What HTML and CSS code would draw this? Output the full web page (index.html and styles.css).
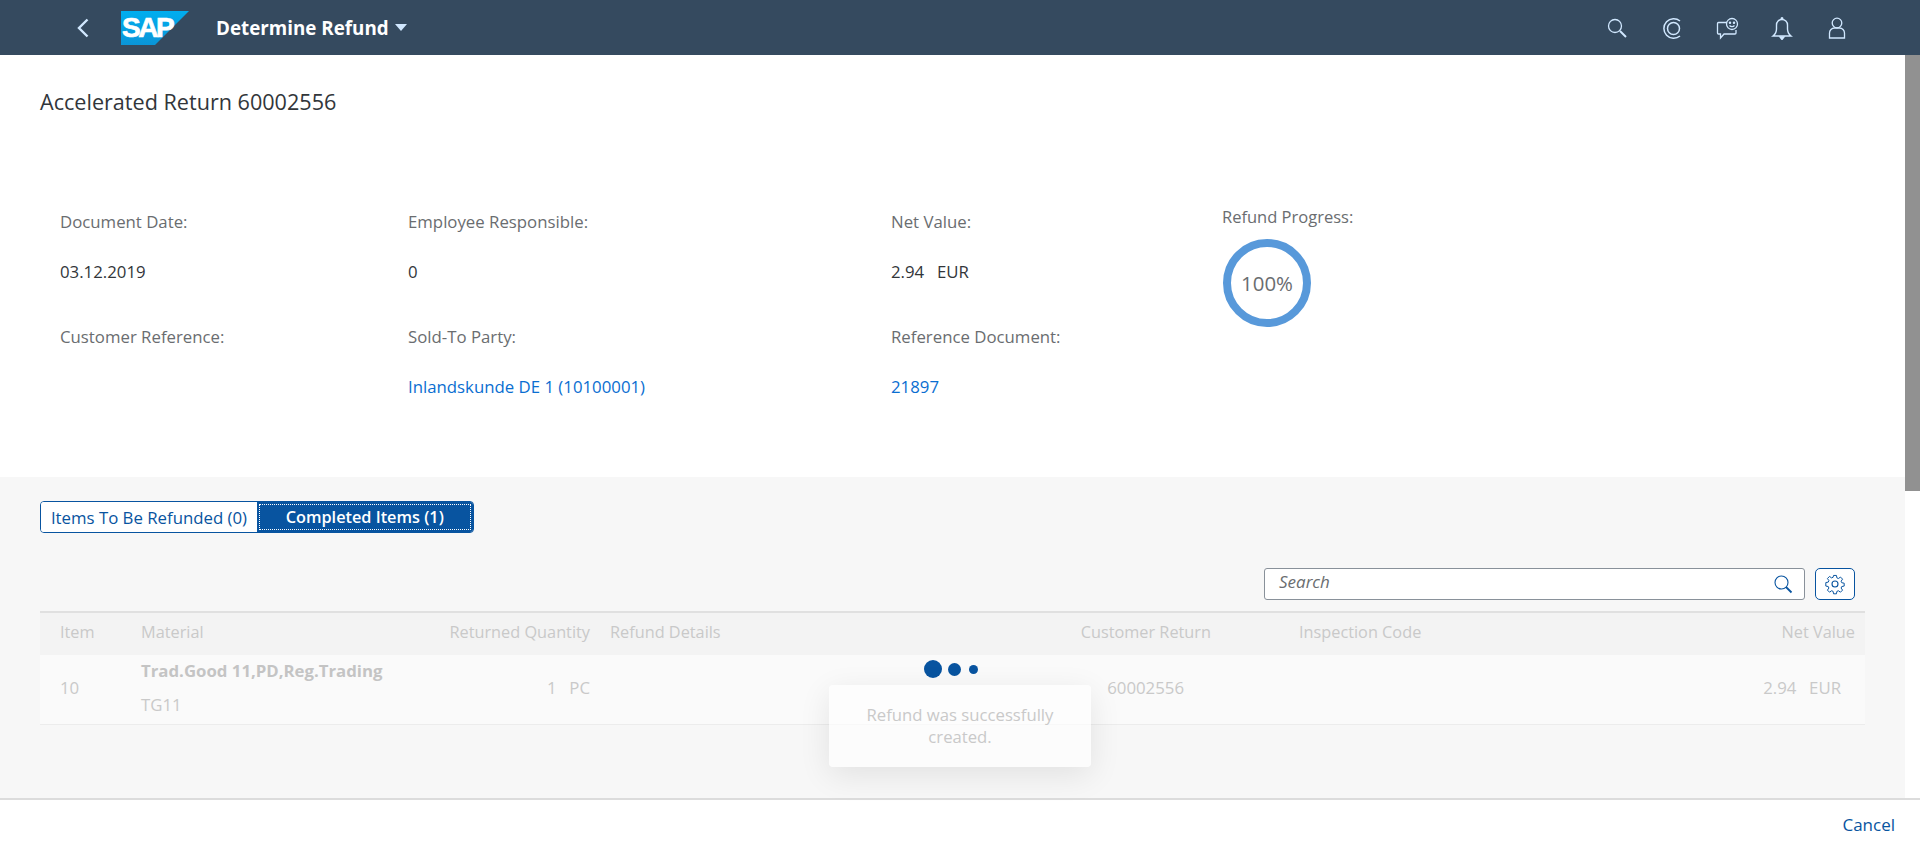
FILE: index.html
```html
<!DOCTYPE html>
<html lang="en">
<head>
<meta charset="utf-8">
<title>Determine Refund</title>
<link rel="stylesheet" href="styles.css">
</head>
<body>
<div class="app">
  <header class="shell">
    <div class="shell-left">
      <svg class="back" width="12" height="20" viewBox="0 0 12 20"><path d="M10.5 1.5 2 10l8.500 8.500" fill="none" stroke="#d1e8ff" stroke-width="2.400"/></svg>
      <div class="logo">
        <svg class="logo-bg" width="68" height="34" viewBox="0 0 68 34"><defs><linearGradient id="sapg" x1="0" y1="0" x2="0" y2="1"><stop offset="0" stop-color="#00aeef"/><stop offset="1" stop-color="#0a95d8"/></linearGradient></defs><polygon points="0,0 68,0 34,34 0,34" fill="url(#sapg)"/></svg>
        <span class="logo-text">SAP</span>
      </div>
      <div class="app-title">Determine Refund</div>
      <span class="caret"></span>
    </div>
    <div class="shell-right">
      <svg class="sh-icon" width="24" height="24" viewBox="0 0 24 24" fill="none" stroke="#d1e8ff" stroke-width="1.300"><circle cx="10" cy="10" r="6.500"/><path d="M15 15l6 6" stroke-width="2"/></svg>
      <svg class="sh-icon" width="24" height="24" viewBox="0 0 24 24" fill="none" stroke="#d1e8ff" stroke-width="1.500"><path d="M20 5A9.800 9.800 0 1 0 20 20"/><circle cx="13.500" cy="12.500" r="6"/></svg>
      <svg class="sh-icon" width="24" height="24" viewBox="0 0 24 24" fill="none" stroke="#d1e8ff" stroke-width="1.300"><path d="M12 6.500H3.500a1 1 0 0 0-1 1V17a1 1 0 0 0 1 1h2v4l3.500-4h11a1 1 0 0 0 1-1v-3"/><circle cx="17" cy="8" r="5.500"/><circle cx="15" cy="6.800" r=".6" fill="#d1e8ff"/><circle cx="19" cy="6.800" r=".6" fill="#d1e8ff"/><path d="M14.500 9.500c1.300 1.500 3.700 1.500 5 0"/></svg>
      <svg class="sh-icon" width="24" height="24" viewBox="0 0 24 24" fill="none" stroke="#d1e8ff" stroke-width="1.400"><path d="M3 20c2.500-2 3.500-3.500 3.500-7V9a5.500 5.500 0 0 1 11 0v4c0 3.500 1 5 3.500 7z"/><path d="M10 21h4l-2 2.500z" fill="#d1e8ff"/><circle cx="12" cy="2.500" r=".8" fill="#d1e8ff"/></svg>
      <svg class="sh-icon" width="24" height="24" viewBox="0 0 24 24" fill="none" stroke="#d1e8ff" stroke-width="1.300"><circle cx="12" cy="7" r="4.800"/><path d="M4.500 22v-5a5 5 0 0 1 5-5h5a5 5 0 0 1 5 5v5z"/></svg>
    </div>
  </header>

  <div class="middle">
    <main class="content">
      <section class="summary">
        <h1 class="doc-title">Accelerated Return 60002556</h1>
        <div class="info-grid">
          <div class="label">Document Date:</div>
          <div class="label">Employee Responsible:</div>
          <div class="label">Net Value:</div>
          <div class="progress-col">
            <div class="progress-label">Refund Progress:</div>
            <div class="ring">100%</div>
          </div>
          <div class="value">03.12.2019</div>
          <div class="value">0</div>
          <div class="value amount">2.94&nbsp; EUR</div>
          <div class="label">Customer Reference:</div>
          <div class="label">Sold-To Party:</div>
          <div class="label">Reference Document:</div>
          <div class="value"></div>
          <div class="value link">Inlandskunde DE 1 (10100001)</div>
          <div class="value link">21897</div>
        </div>
      </section>

      <section class="items">
        <div class="segmented">
          <div class="seg seg-off">Items To Be Refunded (0)</div>
          <div class="seg seg-on">Completed Items (1)</div>
        </div>
        <div class="toolbar">
          <div class="search">
            <span class="search-ph">Search</span>
            <svg width="20" height="20" viewBox="0 0 20 20" fill="none" stroke="#0854a0" stroke-width="1.100"><circle cx="8.500" cy="8.500" r="6.500"/><path d="M13 13l5.500 5.500" stroke-width="1.800"/></svg>
          </div>
          <button class="settings" type="button" aria-label="Settings">
            <svg width="22" height="22" viewBox="0 0 22 22" fill="none" stroke="#0854a0" stroke-width="1.100"><path d="M9.400 1.500h3.200l.5 2.700 1.700.7 2.300-1.600 2.300 2.300-1.600 2.300.7 1.700 2.700.5v3.200l-2.700.5-.7 1.700 1.600 2.300-2.300 2.300-2.300-1.600-1.700.7-.5 2.700H9.400l-.5-2.700-1.700-.7-2.300 1.600-2.300-2.300 1.600-2.300-.7-1.700-2.700-.5V9.400l2.700-.5.7-1.700-1.600-2.300 2.300-2.300 2.300 1.600 1.700-.7z" transform="translate(1.100 1.100) scale(.9)"/><circle cx="11" cy="11" r="3"/></svg>
          </button>
        </div>

        <div class="table">
          <div class="tr thead">
            <div class="c-item">Item</div>
            <div class="c-mat">Material</div>
            <div class="c-qty">Returned Quantity</div>
            <div class="c-det">Refund Details</div>
            <div class="c-ret">Customer Return</div>
            <div class="c-ins">Inspection Code</div>
            <div class="c-net">Net Value</div>
          </div>
          <div class="tr tbody">
            <div class="c-item">10</div>
            <div class="c-mat">
              <div class="mat-name">Trad.Good 11,PD,Reg.Trading</div>
              <div class="mat-id">TG11</div>
            </div>
            <div class="c-qty">1&nbsp; PC</div>
            <div class="c-det"></div>
            <div class="c-ret c-ret-val">60002556</div>
            <div class="c-ins"></div>
            <div class="c-net c-net-val">2.94&nbsp; EUR</div>
          </div>
        </div>
      </section>
    </main>
    <div class="scrollbar"><div class="thumb"></div></div>
  </div>

  <footer class="footer"><span class="cancel">Cancel</span></footer>

  <div class="dots"><span class="dot d1"></span><span class="dot d2"></span><span class="dot d3"></span></div>
  <div class="toast">Refund was successfully created.</div>
</div>
</body>
</html>
```

FILE: styles.css
```css
* { box-sizing: border-box; }
html, body { margin: 0; height: 100%; overflow: hidden; }
body { font-family: "Open Sans", "Liberation Sans", sans-serif; color: #32363a; background: #fff; }

.app { position: relative; width: 1920px; height: 848px; display: flex; flex-direction: column; }

.shell { height: 55px; flex: none; background: #354a5f; display: flex; align-items: center; justify-content: space-between; }
.shell-left { display: flex; align-items: center; padding-left: 77px; }
.back { margin-right: 32px; }
.logo { position: relative; width: 68px; height: 34px; margin-right: 27px; }
.logo-bg { display: block; }
.logo-text { position: absolute; left: 1px; top: 3px; font: bold 28px/28px "Liberation Sans", sans-serif; letter-spacing: -2.500px; color: #fff; -webkit-text-stroke: .7px #fff; }
.app-title { font-size: 18.800px; font-weight: 700; color: #fff; white-space: nowrap; }
.caret { width: 0; height: 0; margin-left: 6px; border-left: 6.500px solid transparent; border-right: 6.500px solid transparent; border-top: 7px solid #d1e8ff; }
.shell-right { display: flex; align-items: center; gap: 31px; padding-right: 71px; }
.sh-icon { display: block; }

.middle { flex: 1; min-height: 0; display: flex; }
.content { flex: 1; min-width: 0; display: flex; flex-direction: column; }
.scrollbar { width: 15px; flex: none; background: #fff; }
.thumb { height: 436px; background: #919191; }

.summary { height: 422px; flex: none; background: #fff; padding: 34px 0 0 40px; }
.doc-title { margin: 0; font-size: 21.600px; line-height: 26px; font-weight: 400; color: #32363a; }
.info-grid { margin: 82px 0 0 20px; display: grid; grid-template-columns: 348px 483px 331px 1fr; grid-template-rows: 50px 65px 50px 50px; }
.label { font-size: 16.800px; line-height: 50px; color: #6a6d70; white-space: nowrap; }
.value { font-size: 16.800px; line-height: 50px; color: #32363a; white-space: nowrap; }
.amount { word-spacing: 2px; }
.link { color: #0a6ed1; }
.progress-col { grid-column: 4; grid-row: 1 / 5; }
.progress-label { font-size: 16.500px; line-height: 40px; color: #6a6d70; white-space: nowrap; }
.ring { width: 88px; height: 88px; margin: 2px 0 0 1px; border: 8px solid #5899da; border-radius: 50%; display: flex; align-items: center; justify-content: center; font-size: 20.400px; color: #6a6d70; }

.items { flex: 1; min-height: 0; background: #f7f7f7; padding: 24px 40px 0 40px; }
.segmented { display: flex; width: 433.500px; height: 32px; border: 1px solid #0854a0; border-radius: 4px; overflow: hidden; font-size: 16.800px; }
.seg { display: flex; align-items: center; justify-content: center; white-space: nowrap; }
.seg-off { width: 216px; background: #fff; color: #0854a0; }
.seg-on { flex: 1; background: #0854a0; color: #fff; outline: 1px dotted #fff; outline-offset: -3px; font-weight: 600; font-size: 16.300px; }

.toolbar { margin-top: 35px; display: flex; justify-content: flex-end; gap: 10px; padding-right: 10px; height: 32px; }
.search { width: 541px; background: #fff; border: 1px solid #89919a; border-radius: 3px; display: flex; align-items: center; justify-content: space-between; padding: 0 11px 0 14px; }
.search-ph { font-size: 17px; line-height: 22px; margin-top: -4px; font-style: italic; color: #6a6d70; }
.search svg { display: block; }
.settings { width: 40px; height: 32px; padding: 0; background: #fff; border: 1px solid #0854a0; border-radius: 5px; display: flex; align-items: center; justify-content: center; }

.table { margin-top: 11px; font-size: 16.300px; color: #c9c9c9; }
.tr { display: grid; grid-template-columns: 91px 269px 200px 400px 221px 379px 265px; }
.tr > div { padding: 0 10px; }
.thead { height: 44px; padding-bottom: 5px; background: #f3f3f3; border-top: 2px solid #e0e0e0; align-items: center; }
.tbody { height: 70px; padding-bottom: 4px; background: #fafafa; border-bottom: 1px solid #ececec; align-items: center; font-size: 16.800px; word-spacing: 2px; }
.tr > .c-item { padding-left: 20px; }
.c-qty, .c-ret, .c-net { text-align: right; white-space: nowrap; }
.tr > .c-ins { padding-left: 78px; }
.tr > .c-ret-val { padding-right: 37px; }
.tr > .c-net-val { padding-right: 24px; }
.mat-name { font-weight: 700; color: #c4c4c4; line-height: 22px; white-space: nowrap; word-spacing: 0; }
.mat-id { margin-top: 12px; line-height: 22px; word-spacing: 0; }

.footer { height: 50px; flex: none; background: #fff; border-top: 2px solid #dcdcdc; display: flex; align-items: center; justify-content: flex-end; padding: 0 25px 0 0; }
.cancel { font-size: 17px; color: #0854a0; }

.dots { position: absolute; left: 924px; top: 660px; display: flex; align-items: center; gap: 5px; }
.dot { display: block; border-radius: 50%; background: #0854a0; }
.d1 { width: 18px; height: 18px; }
.d2 { width: 13px; height: 13px; margin-left: 1px; }
.d3 { width: 9px; height: 9px; margin-left: 3px; }

.toast { position: absolute; left: 829px; top: 685px; width: 262px; height: 82px; padding: 19px 18px; background: rgba(255,255,255,.65); border-radius: 4px; box-shadow: 0 8px 32px rgba(0,0,0,.09); font-size: 16.700px; line-height: 22px; color: #c9c9c9; text-align: center; }
```
